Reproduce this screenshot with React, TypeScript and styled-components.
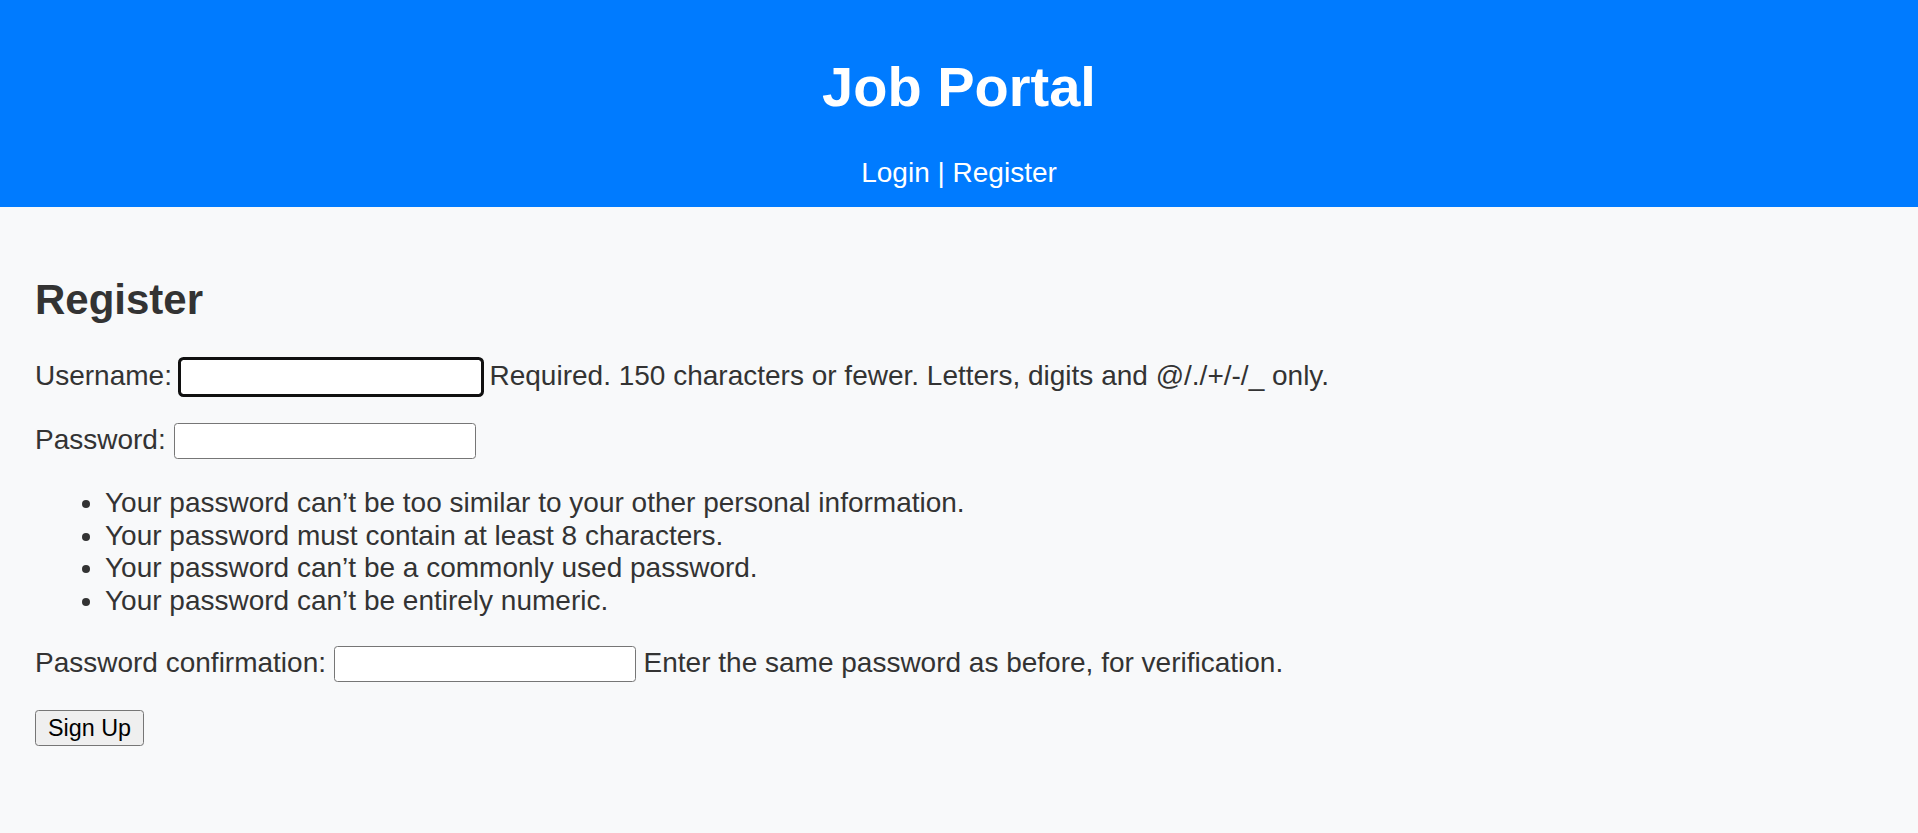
import React from "react";
import styled, { createGlobalStyle } from "styled-components";

const GlobalStyle = createGlobalStyle`
  html, body {
    margin: 0;
    padding: 0;
  }
  body {
    background: #f8f9fa;
    font-family: "Liberation Sans", Arial, Helvetica, sans-serif;
    font-size: 28px;
    color: #333333;
  }
`;

const Header = styled.header`
  background: #007bff;
  color: #ffffff;
  text-align: center;
  padding: 16.5px 0 18px;
`;

const Title = styled.h1`
  font-size: 56px;
  font-weight: bold;
  margin: 37.5px 0;
`;

const Nav = styled.nav`
  font-size: 28px;
`;

const NavLink = styled.a`
  color: #ffffff;
  text-decoration: none;
`;

const Main = styled.main`
  padding: 35px;
`;

const Heading = styled.h2`
  font-size: 42px;
  font-weight: bold;
  margin: 34.9px 0;
`;

const Field = styled.p`
  margin: 28px 0;
`;

const Input = styled.input<{ $focused?: boolean }>`
  box-sizing: border-box;
  width: 302px;
  height: 36px;
  padding: 0 5px;
  border: 1px solid #767676;
  border-radius: 3.5px;
  background: #ffffff;
  font-family: "Liberation Sans", Arial, sans-serif;
  font-size: 23.33px;
  vertical-align: baseline;
  outline: ${(p) => (p.$focused ? "3px solid #101010" : "none")};
  outline-offset: -1.5px;
`;

const Rules = styled.ul`
  margin: 28px 0;
  padding-left: 70px;
  line-height: 32.6px;
`;

const SubmitButton = styled.button`
  box-sizing: border-box;
  height: 36.75px;
  padding: 0 12px;
  background: #efefef;
  border: 1px solid #767676;
  border-radius: 3.5px;
  color: #000000;
  font-family: "Liberation Sans", Arial, sans-serif;
  font-size: 23.33px;
`;

const rules = [
  "Your password can\u2019t be too similar to your other personal information.",
  "Your password must contain at least 8 characters.",
  "Your password can\u2019t be a commonly used password.",
  "Your password can\u2019t be entirely numeric.",
];

export default function App() {
  return (
    <>
      <GlobalStyle />
      <Header>
        <Title>Job Portal</Title>
        <Nav>
          <NavLink href="#">Login</NavLink> | <NavLink href="#">Register</NavLink>
        </Nav>
      </Header>
      <Main>
        <Heading>Register</Heading>
        <form onSubmit={(e) => e.preventDefault()}>
          <Field>
            <label htmlFor="id_username">Username:</label>{" "}
            <Input id="id_username" type="text" $focused />{" "}
            <span>Required. 150 characters or fewer. Letters, digits and @/./+/-/_ only.</span>
          </Field>
          <Field>
            <label htmlFor="id_password1">Password:</label>{" "}
            <Input id="id_password1" type="password" />
          </Field>
          <Rules>
            {rules.map((r) => (
              <li key={r}>{r}</li>
            ))}
          </Rules>
          <Field>
            <label htmlFor="id_password2">Password confirmation:</label>{" "}
            <Input id="id_password2" type="password" />{" "}
            <span>Enter the same password as before, for verification.</span>
          </Field>
          <SubmitButton type="submit">Sign Up</SubmitButton>
        </form>
      </Main>
    </>
  );
}
